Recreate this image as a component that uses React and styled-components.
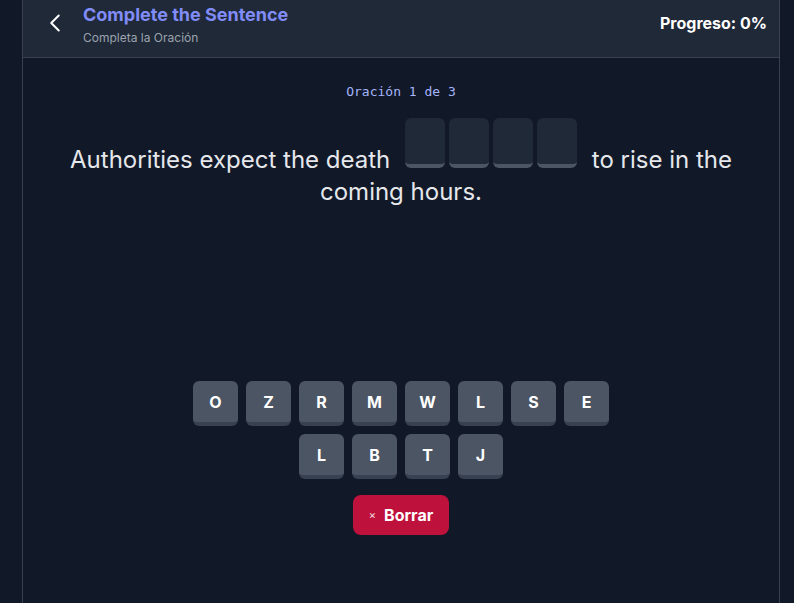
import React, { useState } from 'react';
import styled, { createGlobalStyle } from 'styled-components';

const GlobalStyle = createGlobalStyle`
  html, body {
    margin: 0;
    padding: 0;
    background: #111827;
    font-family: 'Inter', 'Noto Sans', sans-serif;
  }
  * { box-sizing: border-box; }
`;

const LETTERS = [
  ['O', 'Z', 'R', 'M', 'W', 'L', 'S', 'E'],
  ['L', 'B', 'T', 'J'],
];

const BackIcon = () => (
  <svg width="24" height="24" viewBox="0 0 24 24" fill="none" stroke="currentColor" strokeWidth="2" strokeLinecap="round" strokeLinejoin="round">
    <path d="M15.75 19.5 8.25 12l7.5-7.5" />
  </svg>
);

const App = () => {
  const [picked, setPicked] = useState([]);
  const blanks = 4;

  return (
    <>
      <GlobalStyle />
      <Page>
        <Frame>
          <Header>
            <TitleGroup>
              <BackButton aria-label="Volver">
                <BackIcon />
              </BackButton>
              <div>
                <Title>Complete the Sentence</Title>
                <Subtitle>Completa la Oración</Subtitle>
              </div>
            </TitleGroup>
            <Progress>Progreso: 0%</Progress>
          </Header>

          <Main>
            <Counter>Oración 1 de 3</Counter>
            <Sentence>
              Authorities expect the death{' '}
              <Blanks>
                {Array.from({ length: blanks }).map((_, i) => (
                  <Blank key={i}>{picked[i] || ''}</Blank>
                ))}
              </Blanks>{' '}
              to rise in the coming hours.
            </Sentence>

            <Keyboard>
              {LETTERS.map((row, r) => (
                <KeyRow key={r}>
                  {row.map((l, i) => (
                    <Key
                      key={i}
                      onClick={() =>
                        picked.length < blanks && setPicked([...picked, l])
                      }
                    >
                      {l}
                    </Key>
                  ))}
                </KeyRow>
              ))}
              <ClearButton onClick={() => setPicked([])}>
                <small>×</small> Borrar
              </ClearButton>
            </Keyboard>
          </Main>
        </Frame>
      </Page>
    </>
  );
};

const Page = styled.div`
  min-height: 603px;
  background: #111827;
  display: flex;
  padding-left: 22px;
`;

const Frame = styled.div`
  width: 758px;
  min-height: 603px;
  border-left: 1px solid #374151;
  border-right: 1px solid #374151;
  display: flex;
  flex-direction: column;
`;

const Header = styled.header`
  height: 58px;
  background: #1f2937;
  border-bottom: 1px solid #374151;
  display: flex;
  justify-content: space-between;
  align-items: flex-start;
  padding: 3px 12px 0 20px;
`;

const TitleGroup = styled.div`
  display: flex;
  align-items: flex-start;
  gap: 16px;
`;

const BackButton = styled.button`
  background: none;
  border: none;
  padding: 0;
  margin-top: 8px;
  width: 24px;
  height: 24px;
  color: #ffffff;
  display: flex;
  align-items: center;
  justify-content: center;
  cursor: pointer;
`;

const Title = styled.h1`
  margin: 0;
  font-size: 18px;
  line-height: 24px;
  font-weight: 700;
  color: #818cf8;
`;

const Subtitle = styled.p`
  margin: 3px 0 0;
  font-size: 12px;
  line-height: 16px;
  color: #9ca3af;
`;

const Progress = styled.div`
  margin-top: 8px;
  font-size: 16px;
  line-height: 24px;
  font-weight: 700;
  color: #ffffff;
`;

const Main = styled.main`
  flex: 1;
  display: flex;
  flex-direction: column;
  align-items: center;
  padding: 26px 40px 40px;
`;

const Counter = styled.div`
  font-family: 'DejaVu Sans Mono', 'Liberation Mono', monospace;
  font-size: 13px;
  line-height: 16px;
  color: #a5b4fc;
`;

const Sentence = styled.p`
  margin: 18px 0 0;
  font-size: 24px;
  line-height: 32px;
  color: #e5e7eb;
  text-align: center;
`;

const Blanks = styled.span`
  display: inline-flex;
  gap: 4px;
  margin: 0 8px;
  vertical-align: 0;
`;

const Blank = styled.span`
  width: 40px;
  height: 50px;
  border-radius: 6px;
  background: #1f2937;
  border-bottom: 4px solid #4b5563;
  display: flex;
  align-items: center;
  justify-content: center;
  color: #ffffff;
  font-weight: 700;
`;

const Keyboard = styled.div`
  margin-top: 173px;
  display: flex;
  flex-direction: column;
  align-items: center;
  gap: 8px;
`;

const KeyRow = styled.div`
  display: flex;
  gap: 8px;
`;

const Key = styled.button`
  width: 45px;
  height: 45px;
  border: none;
  border-bottom: 4px solid #374151;
  border-radius: 6px;
  background: #4b5563;
  color: #ffffff;
  font-family: 'Inter', sans-serif;
  font-size: 16px;
  font-weight: 700;
  padding: 0;
  cursor: pointer;
`;

const ClearButton = styled.button`
  margin-top: 8px;
  width: 96px;
  height: 40px;
  border: none;
  border-radius: 8px;
  background: #be123c;
  color: #ffffff;
  font-family: 'Inter', sans-serif;
  font-size: 16px;
  font-weight: 700;
  display: flex;
  align-items: center;
  justify-content: center;
  gap: 8px;
  cursor: pointer;

  small {
    font-size: 11px;
    font-weight: 400;
    opacity: 0.85;
  }
`;

export default App;
